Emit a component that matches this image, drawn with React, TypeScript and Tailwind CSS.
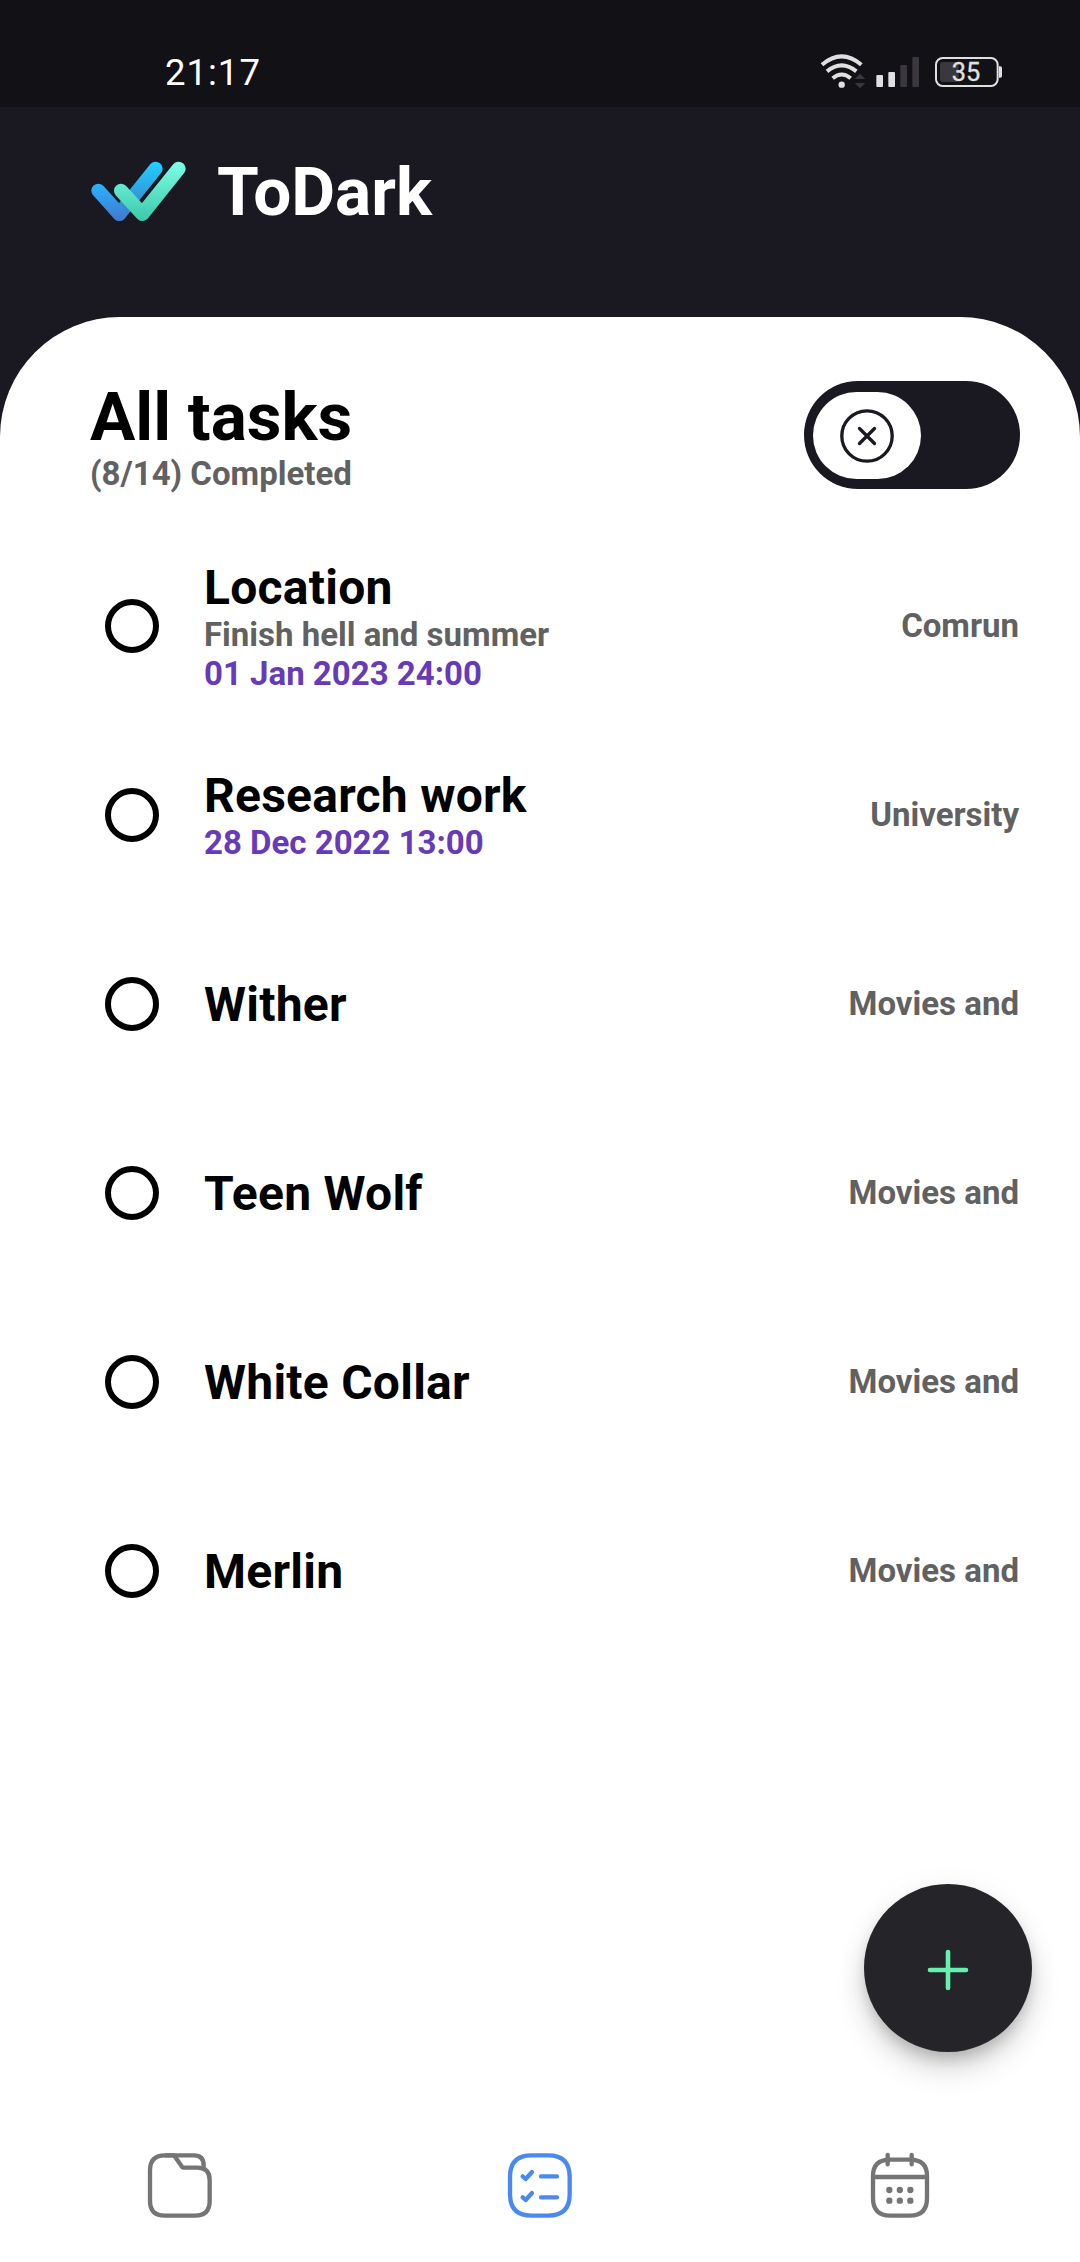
type Task = { title: string; note?: string; date?: string; category: string };

const tasks: Task[] = [
  { title: "Location", note: "Finish hell and summer", date: "01 Jan 2023 24:00", category: "Comrun" },
  { title: "Research work", date: "28 Dec 2022 13:00", category: "University" },
  { title: "Wither", category: "Movies and" },
  { title: "Teen Wolf", category: "Movies and" },
  { title: "White Collar", category: "Movies and" },
  { title: "Merlin", category: "Movies and" },
];

function StatusIcons() {
  return (
    <svg className="h-[80px] w-[230px]" viewBox="0 0 690 240" fill="none">
      <g stroke="#e0e0e0" strokeWidth="12">
        <path d="M66 74 Q125 24 184 74" />
        <path d="M81 94 Q125 58 169 94" />
        <path d="M98 115 Q125 92 152 115" />
      </g>
      <circle cx="125" cy="134" r="9.5" fill="#e0e0e0" />
      <path d="M164 117 L180 101 L196 117 Z M164 129 L180 145 L196 129 Z" fill="#3a383e" />
      <rect x="229" y="105" width="20" height="36" rx="3" fill="#e0e0e0" />
      <rect x="265" y="96" width="20" height="45" rx="3" fill="#e0e0e0" />
      <rect x="301" y="75" width="20" height="66" rx="3" fill="#3a383e" />
      <rect x="337" y="51" width="20" height="90" rx="3" fill="#3a383e" />
      <rect x="408" y="54" width="185" height="84" rx="20" stroke="#e0e0e0" strokeWidth="6" />
      <rect x="420" y="66" width="56" height="60" rx="10" fill="#3a383e" />
      <path d="M597 79 h4 q5 0 5 5 v24 q0 5 -5 5 h-4 Z" fill="#e0e0e0" />
      <text x="498" y="124" textAnchor="middle" fontFamily="Roboto, sans-serif" fontSize="76" fill="#e0e0e0" stroke="#e0e0e0" strokeWidth="1">
        35
      </text>
    </svg>
  );
}

function Logo() {
  return (
    <svg className="h-[60px] w-[96px]" viewBox="94 422 288 180" fill="none">
      <defs>
        <linearGradient id="blue" x1="0" y1="425" x2="0" y2="602" gradientUnits="userSpaceOnUse">
          <stop offset="0" stopColor="#22d0ff" />
          <stop offset="0.6" stopColor="#3098d8" />
          <stop offset="1" stopColor="#4078d0" />
        </linearGradient>
        <linearGradient id="azure" x1="0" y1="490" x2="0" y2="602" gradientUnits="userSpaceOnUse">
          <stop offset="0" stopColor="#28b4ff" />
          <stop offset="1" stopColor="#4476cc" />
        </linearGradient>
        <linearGradient id="mint" x1="0" y1="424" x2="0" y2="602" gradientUnits="userSpaceOnUse">
          <stop offset="0" stopColor="#7dffe6" />
          <stop offset="1" stopColor="#3cc8aa" />
        </linearGradient>
      </defs>
      <g strokeWidth="42" strokeLinecap="round" strokeLinejoin="round">
        <path d="M179 581 L288 445" stroke="url(#blue)" />
        <path d="M116 511 L179 581" stroke="url(#azure)" />
        <path d="M184 511 L248 581 L357 445" stroke="url(#mint)" />
      </g>
    </svg>
  );
}

function FolderIcon() {
  return (
    <svg className="h-[110px] w-[100px]" viewBox="0 0 300 330" fill="none" stroke="#757575" strokeWidth="13" strokeLinejoin="round">
      <path d="M105 76 H192 Q221 76 221 106 V116" />
      <path d="M132 76 H105 Q60 76 60 121 V213 Q60 257 105 257 H195 Q239 257 239 213 V150 Q239 113 202 113 H162 Q158 113 155 109 Z" />
    </svg>
  );
}

function TasksIcon() {
  return (
    <svg className="h-[110px] w-[100px]" viewBox="0 0 300 330" fill="none" stroke="#4a8af0" strokeWidth="13" strokeLinecap="round" strokeLinejoin="round">
      <path d="M60 140 Q60 76 124 76 H175 Q239 76 239 140 V193 Q239 257 175 257 H124 Q60 257 60 193 Z" />
      <path d="M153 139 H201 M153 202 H201 M98 139 L107 147 L126 126 M98 202 L107 210 L126 189" />
    </svg>
  );
}

function CalendarIcon() {
  return (
    <svg className="h-[110px] w-[100px]" viewBox="0 0 300 330" fill="none" stroke="#757575" strokeWidth="13" strokeLinecap="round">
      <path d="M69 138 Q69 89 120 89 H180 Q231 89 231 138 V204 Q231 257 180 257 H120 Q69 257 69 204 Z" />
      <path d="M113 75 V103 M185 75 V103" />
      <path d="M69 141 H231" strokeLinecap="butt" />
      <g fill="#757575" stroke="none">
        {[118, 149.5, 181].map((x) => (
          <g key={x}>
            <circle cx={x} cy="180" r="9.5" />
            <circle cx={x} cy="212" r="9.5" />
          </g>
        ))}
      </g>
    </svg>
  );
}

function TaskRow({ task }: { task: Task }) {
  return (
    <li className="flex h-[189px] items-center pr-[61px] pl-[105px]">
      <span className="size-[54px] shrink-0 rounded-full border-6 border-black" />
      <div className="ml-[45px] flex-1 font-bold">
        <p className="pt-[2px] text-[48px] leading-[54px] tracking-[0.25px] text-black">{task.title}</p>
        {task.note && <p className="text-[33px] leading-[39px] text-[#616161]">{task.note}</p>}
        {task.date && <p className="text-[33px] leading-[39px] text-[#673ab7]">{task.date}</p>}
      </div>
      <span className="text-[33px] leading-[39px] font-bold text-[#616161]">{task.category}</span>
    </li>
  );
}

export default function App() {
  return (
    <div className="relative flex h-[2262px] w-[1080px] flex-col overflow-hidden bg-[#1a1820] font-['Roboto',sans-serif]">
      <div className="flex h-[107px] shrink-0 items-start justify-between bg-[#121116] pr-[50px] pl-[165px]">
        <span className="mt-[51px] text-[36.5px] leading-[44px] tracking-[1px] text-white">21:17</span>
        <div className="mt-[40px] h-[60px]">
          <StatusIcons />
        </div>
      </div>
      <header className="flex h-[210px] shrink-0 items-start pl-[91px]">
        <div className="mt-[54px]">
          <Logo />
        </div>
        <h1 className="mt-[45px] ml-[30px] text-[67.5px] leading-[79px] font-bold text-white">ToDark</h1>
      </header>
      <main className="flex flex-1 flex-col rounded-t-[120px] bg-white">
        <div className="flex h-[214px] shrink-0 items-start justify-between pr-[60px] pl-[90px]">
          <div className="mt-[61px] font-bold">
            <h2 className="text-[67.5px] leading-[77px] text-black">All tasks</h2>
            <p className="-mt-[1px] text-[33px] leading-[39px] text-[#616161]">(8/14) Completed</p>
          </div>
          <div className="mt-[64.4px] flex h-[108px] w-[216px] items-center rounded-full bg-[#1a1820] pl-[9px]">
            <div className="flex h-[87px] w-[108px] items-center justify-center rounded-full bg-white pt-[2px]">
              <svg className="size-[54px]" viewBox="0 0 54 54" fill="none" stroke="#1a1820" strokeWidth="3.3" strokeLinecap="round">
                <circle cx="27" cy="27" r="25.2" />
                <path d="M19.5 19.5 L34.5 34.5 M34.5 19.5 L19.5 34.5" />
              </svg>
            </div>
          </div>
        </div>
        <ul>
          {tasks.map((t) => (
            <TaskRow key={t.title} task={t} />
          ))}
        </ul>
        <nav className="mt-auto grid h-[132px] grid-cols-3 justify-items-center">
          <FolderIcon />
          <TasksIcon />
          <CalendarIcon />
        </nav>
      </main>
      <button className="absolute right-[48px] bottom-[210px] flex size-[168px] items-center justify-center rounded-full bg-[#252429] shadow-[0_9px_15px_-3px_rgba(0,0,0,0.2),0_18px_30px_0_rgba(0,0,0,0.14),0_3px_36px_0_rgba(0,0,0,0.04)]">
        <svg className="mt-[3px] size-[42px]" viewBox="0 0 42 42" stroke="#69f0ae" strokeWidth="4.6" strokeLinecap="round">
          <path d="M3 21 H39 M21 3 V39" />
        </svg>
      </button>
    </div>
  );
}
